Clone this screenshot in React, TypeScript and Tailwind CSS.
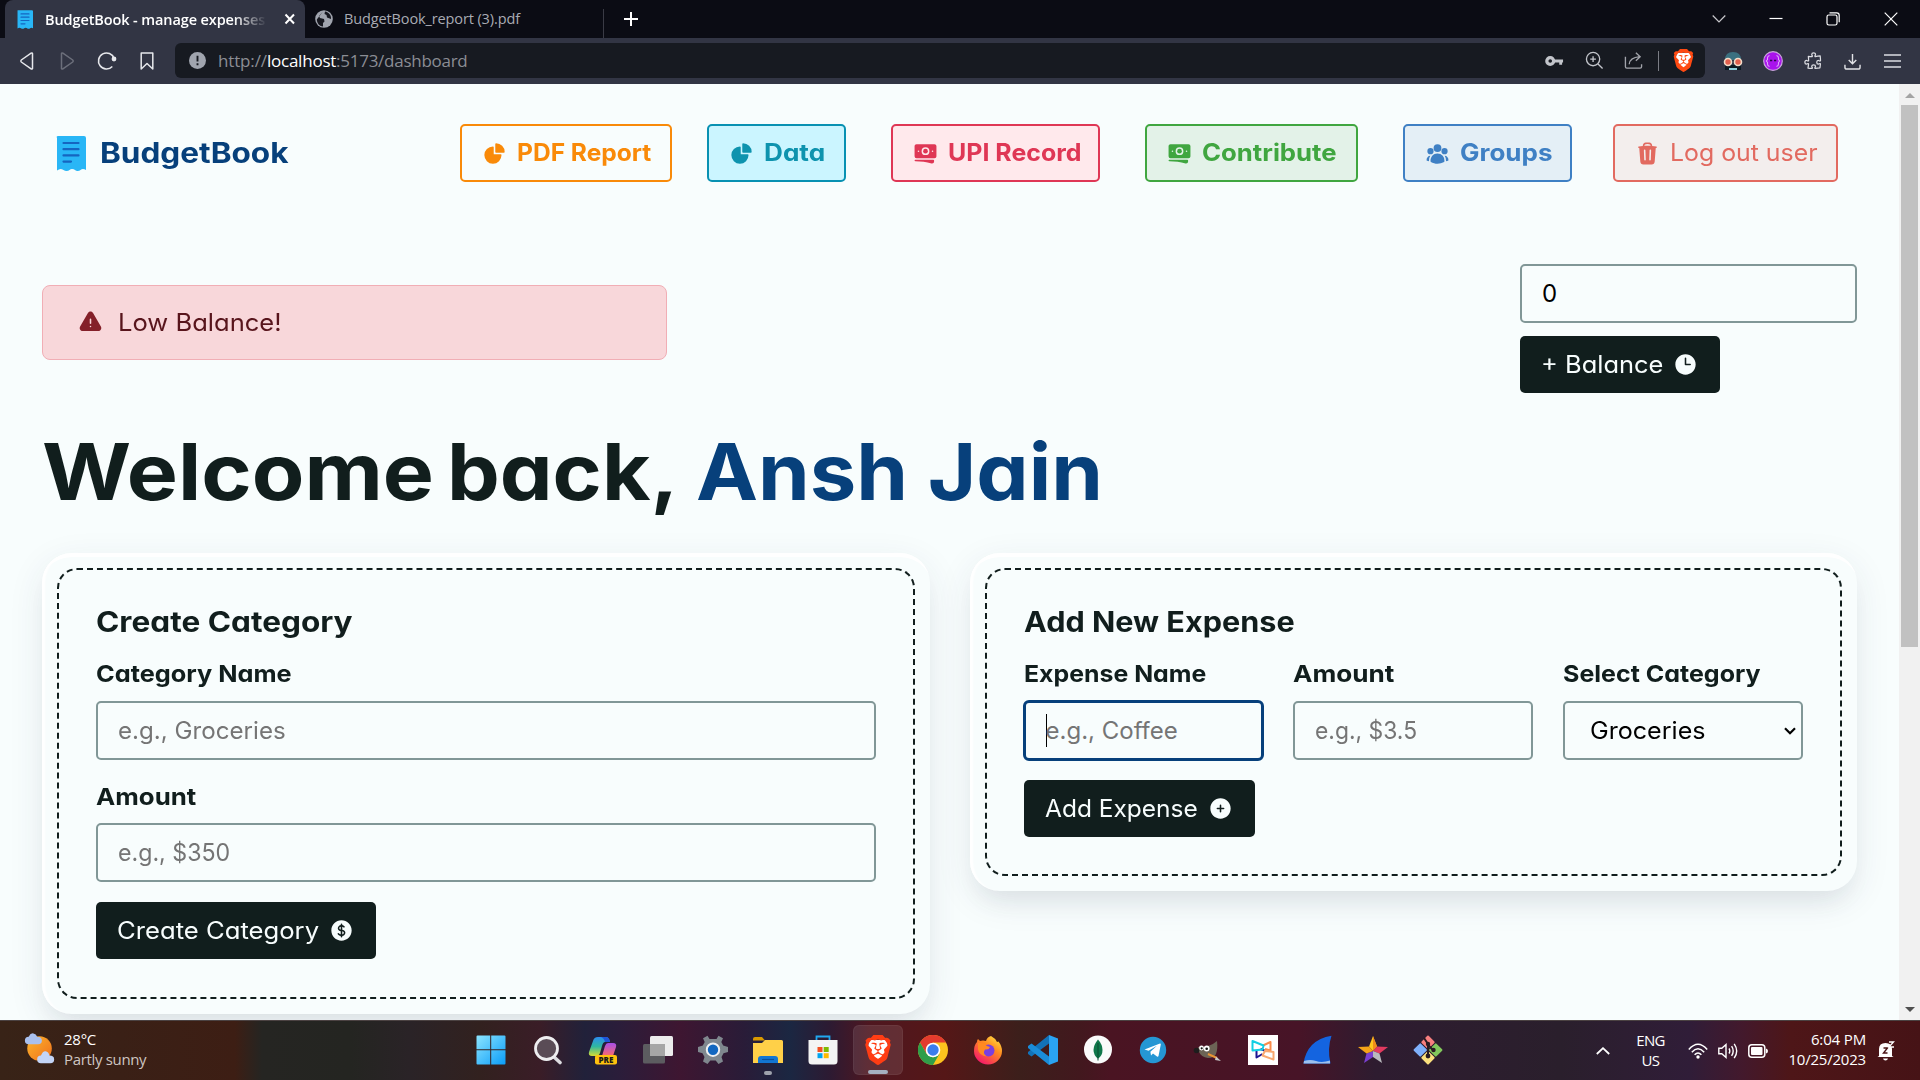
import { useLayoutEffect, useRef, useState, type ReactNode } from "react";
import {
  HiChartPie,
  HiBanknotes,
  HiUserGroup,
  HiTrash,
  HiExclamationTriangle,
  HiClock,
  HiCurrencyDollar,
  HiPlusCircle,
  HiOutlinePuzzlePiece,
} from "react-icons/hi2";
import { SiBrave } from "react-icons/si";

/* Text run spread with letter-spacing so that it fills `w` pixels. */
function Fit({ w, className = "", children }: { w: number; className?: string; children: string }) {
  const ref = useRef<HTMLSpanElement>(null);
  const [spacing, setSpacing] = useState(0);
  useLayoutEffect(() => {
    const el = ref.current;
    if (!el) return;
    setSpacing((w - el.offsetWidth) / children.length);
  }, [w, children]);
  return (
    <span ref={ref} className={"inline-block whitespace-pre " + className} style={{ letterSpacing: spacing }}>
      {children}
    </span>
  );
}

/* Text run whose letters are widened so that it fills `w` pixels. */
function Wide({ w, className = "", children }: { w: number; className?: string; children: string }) {
  const ref = useRef<HTMLSpanElement>(null);
  const [scale, setScale] = useState(1);
  useLayoutEffect(() => {
    const el = ref.current;
    if (!el) return;
    setScale(w / el.offsetWidth);
  }, [w, children]);
  return (
    <span className={"inline-block shrink-0 text-left whitespace-pre " + className} style={{ width: w }}>
      <span ref={ref} className="inline-block origin-left" style={{ transform: `scaleX(${scale})` }}>
        {children}
      </span>
    </span>
  );
}

function ReceiptLogo({ className }: { className: string }) {
  return (
    <svg viewBox="0 0 30 35" className={className}>
      <path
        d="M2 0h26q2 0 2 2v32q-1.500-1-3-1-1.500 0-2.500 1t-3 1q-1.500 0-2.500-1t-3-1q-1.500 0-2.500 1t-3 1q-1.500 0-3-1t-3-1q-1.500 0-3.500 1.500V2Q0 0 2 0Z"
        fill="#29b6f6"
      />
      <path d="M7.500 7h15M7.500 13.200h15M7.500 19.400h15M7.500 25.600h7.500" stroke="#1565c0" strokeWidth="2.200" strokeLinecap="round" />
    </svg>
  );
}

function BraveLion({ className, orange = "#fb542b" }: { className: string; orange?: string }) {
  return (
    <span className={"grid place-items-center " + className}>
      <svg viewBox="0 0 24 24" className="col-start-1 row-start-1 size-full">
        <path d="M5 4h14l1 6-3 9-5 3-5-3-3-9z" fill="#fff" />
      </svg>
      <SiBrave className="col-start-1 row-start-1 size-full" color={orange} />
    </span>
  );
}

function TabStrip() {
  return (
    <div className="flex h-[38px] items-stretch bg-[#0b0c14] pl-[5px] text-[15px] text-white">
      <div className="flex w-[300px] items-center rounded-t-lg bg-[#323544] pl-3">
        <ReceiptLogo className="h-[19px] w-4" />
        <div className="ml-3 w-[222px] overflow-hidden [mask-image:linear-gradient(to_right,black_85%,transparent)]">
          <Fit w={220} className="text-[14.5px] font-semibold">
            BudgetBook - manage expenses
          </Fit>
        </div>
        <svg viewBox="0 0 12 12" className="ml-[17px] size-3" stroke="#fff" strokeWidth="2">
          <path d="M1.500 1.500l8.500 9M10 1.500l-8.500 9" />
        </svg>
      </div>
      <div className="flex w-[298px] items-center pl-[10px] text-[#a9abb3]">
        <svg viewBox="0 0 18 18" className="size-[18px]">
          <circle cx="9" cy="9" r="8.800" fill="#a0a4ae" />
          <path d="M8 1.500L4 6l1 2 4 1 .5 2.500L8 13v3.500C4 16 2 13 1.800 9.500M10 1.500L9.500 4l2 1 .5 2.500 4 1.500c.5-3.500-2-7-6-7.500" fill="#16171f" />
        </svg>
        <Fit w={176} className="ml-[11px] text-[14.5px]">
          BudgetBook_report (3).pdf
        </Fit>
      </div>
      <div className="mt-[9px] w-px bg-[#3a3b45]" />
      <svg viewBox="0 0 16 16" className="ml-[19px] mt-[11px] size-4" stroke="#fff" strokeWidth="2">
        <path d="M8 1v14M1 8h14" />
      </svg>
      <div className="ml-auto flex items-center">
        <svg viewBox="0 0 14 14" className="mr-[43px] size-[14px]" fill="none" stroke="#c9c9cd" strokeWidth="1.200">
          <path d="M.7 3.500L7 10l6.300-6.500" />
        </svg>
        <svg viewBox="0 0 14 14" className="mr-[43px] size-[14px]" stroke="#fff" strokeWidth="1.200">
          <path d="M.5 6.500h13" />
        </svg>
        <svg viewBox="0 0 14 14" className="mr-[44px] size-[14px]" fill="none" stroke="#fff" strokeWidth="1.200">
          <rect x="1" y="3" width="10" height="10" rx="1.800" />
          <path d="M3.500.8h7.200Q13.200.8 13.200 3.200v7" />
        </svg>
        <svg viewBox="0 0 14 14" className="mr-[22px] size-[14px]" stroke="#fff" strokeWidth="1.200">
          <path d="M.7.700l12.600 12.600M13.300.7L.7 13.300" />
        </svg>
      </div>
    </div>
  );
}

function AddressBar() {
  return (
    <div className="flex h-[46px] items-center bg-[#323544]">
      <div className="mb-px flex w-[175px] items-center gap-5 pl-[17px]">
        <svg viewBox="0 0 20 20" className="size-5" fill="none" stroke="#e6e7eb" strokeWidth="1.500" strokeLinejoin="round">
          <path d="M15.500 2.500v15q-.4 1-1.400.3L4.300 11q-1-1 0-2l9.800-6.800q1-.6 1.400.3Z" />
        </svg>
        <svg viewBox="0 0 20 20" className="size-5" fill="none" stroke="#6c6f7b" strokeWidth="1.500" strokeLinejoin="round">
          <path d="M4.500 2.500v15q.4 1 1.400.3l9.800-6.800q1-1 0-2L5.900 2.200q-1-.6-1.400.3Z" />
        </svg>
        <svg viewBox="0 0 20 20" className="size-5" fill="none" stroke="#e6e7eb" strokeWidth="1.600">
          <path d="M15.300 15.500a8 8 0 1 1 1.800-8" />
          <circle cx="17" cy="8" r="1.600" fill="#e6e7eb" />
        </svg>
        <svg viewBox="0 0 20 20" className="size-5" fill="none" stroke="#e6e7eb" strokeWidth="1.500" strokeLinejoin="round">
          <path d="M4.200 2h11.600v16L10 12.500 4.200 18Z" />
        </svg>
      </div>
      <div className="mb-px flex h-[35px] w-[1530px] items-center rounded-md bg-[#171a21]">
        <svg viewBox="0 0 18 18" className="ml-[14px] size-[17px]">
          <circle cx="9" cy="9" r="9" fill="#a0a4ae" />
          <path d="M9 4v6M9 12v2" stroke="#171a21" strokeWidth="2" />
        </svg>
        <div className="ml-3 flex w-[252px] text-[17px] text-[#8b8d94]">
          <Fit w={49}>http://</Fit>
          <Fit w={69} className="text-white">localhost</Fit>
          <Fit w={131}>:5173/dashboard</Fit>
        </div>
        <svg viewBox="0 0 20 12" className="ml-auto h-3 w-[19px]" fill="none" stroke="#c3c5cb">
          <circle cx="5.500" cy="6" r="3.600" strokeWidth="3.400" />
          <path d="M9 6h10M16.500 6v4" strokeWidth="3" />
        </svg>
        <svg viewBox="0 0 20 20" className="ml-[21px] size-[19px]" fill="none" stroke="#c3c5cb" strokeWidth="1.400">
          <circle cx="8.500" cy="8.500" r="7" />
          <path d="M13.700 13.700l4.800 4.800M8.500 5.500v6M5.500 8.500h6" />
        </svg>
        <svg viewBox="0 0 20 20" className="ml-5 size-[19px]" fill="none" stroke="#a2a4ab" strokeWidth="1.400">
          <path d="M1.500 6v10.500q0 1.500 1.500 1.500h14q1.500 0 1.500-1.500V14" />
          <path d="M5.500 14Q6 7 16.500 6M12.500 1.800L17 6l-4.500 4.200" />
        </svg>
        <div className="ml-[15px] h-5 w-px bg-[#7b7d85]" />
        <BraveLion className="ml-[13px] mr-[10px] size-[23px]" orange="#ff4a12" />
      </div>
      <svg viewBox="0 0 20 20" className="ml-[18px] size-5">
        <path d="M2 9Q2 1 10 1t8 8z" fill="#3b7080" />
        <path d="M2 14h16v5H2z" fill="#0c1a22" />
        <path d="M6 17h8v2H6z" fill="#8fd0dc" />
        <circle cx="5" cy="11" r="3.500" fill="#e2604e" stroke="#f3dcc8" strokeWidth="1.600" />
        <circle cx="15" cy="11" r="3.500" fill="#e2604e" stroke="#f3dcc8" strokeWidth="1.600" />
      </svg>
      <svg viewBox="0 0 20 20" className="ml-5 size-5" fill="none">
        <circle cx="10" cy="10" r="9.300" fill="#a913ec" stroke="#c9a5dc" strokeWidth="1.200" />
        <path d="M6.500 4.500q-2 .5-2 2.500v1.500L3.300 10l1.200 1.500V13q0 2 2 2.500M13.500 4.500q2 .5 2 2.500v1.500l1.200 1.500-1.200 1.500V13q0 2-2 2.500" stroke="#dba6f7" strokeWidth="1.100" />
        <path d="M7 9.500h2.200M11 9.500h2.200" stroke="#2b0848" strokeWidth="1.500" />
      </svg>
      <HiOutlinePuzzlePiece className="ml-5 size-5 text-[#dcdde2]" />
      <svg viewBox="0 0 18 18" className="ml-[21px] size-[17px]" fill="none" stroke="#e2e3e7" strokeWidth="1.500">
        <path d="M9 1v10M5 7.500L9 11.500l4-4M1 12.500v2.500q0 2 2 2h12q2 0 2-2v-2.500" />
      </svg>
      <svg viewBox="0 0 17 14" className="ml-[23px] h-[14px] w-[17px]" stroke="#dcdde2" strokeWidth="1.500">
        <path d="M0 1h17M0 7h17M0 13h17" />
      </svg>
    </div>
  );
}

function NavButton({ className, icon, children }: { className: string; icon: ReactNode; children: ReactNode }) {
  return (
    <button className={"flex h-[58px] items-center gap-[10px] rounded-[5px] border-2 pl-5 text-[24px] " + className}>
      {icon}
      {children}
    </button>
  );
}

function NavBar() {
  return (
    <nav className="flex h-[58px] items-center pl-[14px]">
      <div className="flex w-[404px] items-center gap-[14px] text-[28px] font-bold text-[#07407b]">
        <ReceiptLogo className="h-[35px] w-[30px]" />
        <Wide w={188}>BudgetBook</Wide>
      </div>
      <NavButton className="w-[212px] border-[#f98a09] font-bold text-[#f98a09]" icon={<HiChartPie className="size-[25px]" />}>
        <Wide w={134}>PDF Report</Wide>
      </NavButton>
      <NavButton className="ml-[35px] w-[139px] border-[#0891b2] bg-[#cbf5ff] font-bold text-[#0e93ae]" icon={<HiChartPie className="size-[25px]" />}>
        <Wide w={61}>Data</Wide>
      </NavButton>
      <NavButton className="ml-[45px] w-[209px] border-[#df3755] bg-[#ffe9ec] font-bold text-[#df3755]" icon={<HiBanknotes className="size-[25px]" />}>
        <Wide w={133}>UPI Record</Wide>
      </NavButton>
      <NavButton className="ml-[45px] w-[213px] border-[#40a640] bg-[#e3f2e8] font-bold text-[#40a640]" icon={<HiBanknotes className="size-[25px]" />}>
        <Wide w={135}>Contribute</Wide>
      </NavButton>
      <NavButton className="ml-[45px] w-[169px] border-[#3f80c4] bg-[#e4eff6] font-bold text-[#3f80c4]" icon={<HiUserGroup className="size-[25px]" />}>
        <Wide w={92}>Groups</Wide>
      </NavButton>
      <NavButton className="ml-[41px] w-[225px] border-[#e26a60] bg-[#f3eeed] text-[#e26a60]" icon={<HiTrash className="size-[25px]" />}>
        <Wide w={148}>Log out user</Wide>
      </NavButton>
    </nav>
  );
}

function DarkButton({ className, icon, children }: { className: string; icon: ReactNode; children: ReactNode }) {
  return (
    <button className={"flex h-[57px] items-center gap-[10px] rounded-[5px] bg-[#111e1d] pl-[21px] text-[24px] text-[#f7fdfd] " + className}>
      {children}
      {icon}
    </button>
  );
}

function Field({ label, children }: { label: ReactNode; children: ReactNode }) {
  return (
    <div className="flex flex-col">
      <div className="flex h-[27px] items-center text-[23.5px] font-bold">{label}</div>
      <div className="mt-[14px] flex">{children}</div>
    </div>
  );
}

const inputBox = "flex h-[59px] w-full items-center rounded-[5px] border-2 border-[#819797] pl-5 text-[24px] text-[#757575]";

function FormCard({ className, children }: { className: string; children: ReactNode }) {
  return (
    <section
      className={
        "rounded-[30px] bg-[#f8fdfd] p-[15px] shadow-[inset_0_7px_0_-3px_#fff,inset_5px_0_2px_-2px_#fff,0_10px_36px_rgba(40,50,90,0.09),0_18px_26px_-10px_rgba(30,40,50,0.07)] " +
        className
      }
    >
      <div className="flex h-full flex-col rounded-[20px] border-2 border-dashed border-[#111e1d] px-[37px] pt-[34px]">{children}</div>
    </section>
  );
}

function Dashboard() {
  return (
    <div className="flex w-[1899px] flex-col bg-[#f8fdfd] pl-[42px] pr-[42px] pt-[40px] font-['Inter','Liberation_Sans',sans-serif] text-[#111e1d] [font-feature-settings:'cv11']">
      <NavBar />
      <div className="mt-[82px] flex h-[129px] items-start justify-between">
        <div className="mt-[21px] flex h-[75px] w-[625px] items-center gap-[15px] rounded-lg border border-[#f1aeb5] bg-[#f8d7da] pl-[35px] text-[24px] text-[#58151c]">
          <HiExclamationTriangle className="size-[25px] text-[#842029]" />
          <Wide w={164}>Low Balance!</Wide>
        </div>
        <div className="flex w-[337px] flex-col gap-[13px]">
          <div className={inputBox}>
            <span className="text-black">0</span>
          </div>
          <DarkButton className="w-[200px]" icon={<HiClock className="size-[25px]" />}>
            <Wide w={122}>+ Balance</Wide>
          </DarkButton>
        </div>
      </div>
      <h1 className="mt-[31px] flex h-24 items-center text-[78px] font-bold leading-none">
        <Wide w={392}>Welcome</Wide>
        <Wide w={232} className="ml-[13px]">back,</Wide>
        <Wide w={407} className="ml-[17px] text-[#07407b]">Ansh Jain</Wide>
      </h1>
      <div className="mt-[33px] flex items-start gap-10">
        <FormCard className="h-[461px] w-[887.5px]">
          <h2 className="flex h-9 items-center text-[28px] font-bold">
            <Wide w={257}>Create Category</Wide>
          </h2>
          <div className="mt-[20px] flex flex-col gap-[22px]">
            <Field label={<Wide w={196}>Category Name</Wide>}>
              <div className={inputBox}>
                <Wide w={168}>e.g., Groceries</Wide>
              </div>
            </Field>
            <Field label={<Wide w={100} className="mt-[2px]">Amount</Wide>}>
              <div className={inputBox}>
                <Wide w={112}>e.g., $350</Wide>
              </div>
            </Field>
          </div>
          <DarkButton className="mt-5 w-[280px]" icon={<HiCurrencyDollar className="size-[25px]" />}>
            <Wide w={202}>Create Category</Wide>
          </DarkButton>
        </FormCard>
        <FormCard className="h-[338px] w-[887.5px]">
          <h2 className="flex h-9 items-center text-[28px] font-bold">
            <Wide w={271}>Add New Expense</Wide>
          </h2>
          <div className="mt-[20px] grid grid-cols-3 gap-[30px]">
            <Field label={<Wide w={182}>Expense Name</Wide>}>
              <div className="-mx-px -my-px flex h-[61px] w-[241px] shrink-0 items-center rounded-md border-[3px] border-[#07407b] pl-5 text-[24px] text-[#757575]">
                <span className="-mr-px h-[33px] w-px bg-black" />
                <Wide w={132}>e.g., Coffee</Wide>
              </div>
            </Field>
            <Field label={<Wide w={101}>Amount</Wide>}>
              <div className={inputBox}>
                <Wide w={102}>e.g., $3.5</Wide>
              </div>
            </Field>
            <Field label={<Wide w={198}>Select Category</Wide>}>
              <div className={inputBox + " justify-between pr-[5px]"}>
                <Wide w={116} className="ml-[5px] text-black">Groceries</Wide>
                <svg viewBox="0 0 12 8" className="h-2 w-3" fill="none" stroke="#000" strokeWidth="2.200">
                  <path d="M1 1.200l5 5 5-5" />
                </svg>
              </div>
            </Field>
          </div>
          <DarkButton className="mt-[20px] w-[231px]" icon={<HiPlusCircle className="size-[25px]" />}>
            <Wide w={153}>Add Expense</Wide>
          </DarkButton>
        </FormCard>
      </div>
    </div>
  );
}

function ScrollBar() {
  return (
    <div className="flex w-[21px] flex-col items-center bg-[#f1f1f1]">
      <svg viewBox="0 0 10 5" className="mt-[9px] h-[5px] w-[10px]" fill="#a3a3a3">
        <path d="M5 0l5 5H0z" />
      </svg>
      <div className="mt-[7px] h-[542px] w-[17px] bg-[#c1c1c1]" />
      <svg viewBox="0 0 10 5" className="mb-2 mt-auto h-[5px] w-[10px]" fill="#505050">
        <path d="M0 0h10L5 5z" />
      </svg>
    </div>
  );
}

const appIcons: ReactNode[] = [
  <svg key="start" viewBox="0 0 30 30" className="mr-[3px] size-[30px]">
    <defs>
      <linearGradient id="win" x1="0" y1="0" x2="1" y2="1">
        <stop offset="0" stopColor="#8ce5ff" />
        <stop offset="1" stopColor="#0a9cf8" />
      </linearGradient>
    </defs>
    <path d="M1.500.5h12.700v13.700H.500V1.500q0-1 1-1ZM15.200.5h13.300q1 0 1 1v12.700H15.200ZM.5 15.200h13.700v14.300H1.500q-1 0-1-1ZM15.200 15.200h14.300v13.300q0 1-1 1H15.200Z" fill="url(#win)" />
  </svg>,
  <svg key="search" viewBox="0 0 30 30" className="size-[30px]">
    <path d="M21 22l6 5.500" stroke="#dcdce0" strokeWidth="3.600" strokeLinecap="round" />
    <circle cx="13.500" cy="13.500" r="11" fill="#5a4c56" stroke="#eeeef0" strokeWidth="2.800" />
  </svg>,
  <svg key="copilot" viewBox="0 0 30 30" className="size-[30px]">
    <defs>
      <linearGradient id="copA" x1="0" y1="0" x2="0" y2="1">
        <stop offset="0" stopColor="#2c8df0" />
        <stop offset=".5" stopColor="#2fb8a0" />
        <stop offset="1" stopColor="#d6dc33" />
      </linearGradient>
      <linearGradient id="copB" x1="0" y1="0" x2="0" y2="1">
        <stop offset="0" stopColor="#a64fe8" />
        <stop offset="1" stopColor="#fb6a6a" />
      </linearGradient>
    </defs>
    <path d="M10 2h8q3 0 4 5h-5q-2 0-3 4l-2 7q-1 3-4 3H4q-4 0-3-4L5 6q1-4 5-4Z" fill="url(#copA)" />
    <path d="M15 2h3q3 0 4 5h-5q-1-4-4-5z" fill="#1f55d8" />
    <path d="M20 8h5q4 0 3 4l-3 9H14l3-10q1-3 3-3Z" fill="url(#copB)" />
    <rect x="7" y="20" width="22" height="9.500" rx="2" fill="#ffc20e" />
    <text x="18" y="27.700" textAnchor="middle" fontSize="8" fontWeight="800" fill="#1a1a1a" fontFamily="Open Sans">PRE</text>
  </svg>,
  <svg key="taskview" viewBox="0 0 30 30" className="size-[30px]">
    <rect x="7" y="1" width="23" height="20" rx="1.500" fill="#ececec" />
    <rect x="0" y="9" width="22" height="19.500" rx="1.500" fill="#5c5c60" />
    <path d="M7 9h15v12H7z" fill="#a6a6a6" />
  </svg>,
  <svg key="settings" viewBox="0 0 30 30" className="size-[30px]">
    <path
      d="M11.500 4L9.500.8 5 3.300 6.700 7 4.800 10.500 0 12v5l4.500 1.300 2 3.700L5 26.500 9.500 29l2.800-3.500h5.400l2.800 3.500 4.500-2.500-1.500-4.500 2-3.700L30 17v-5l-4.800-1.500L23.300 7 25 3.300 20.500.8l-2 3.200Z"
      fill="#7f878e"
    />
    <circle cx="15" cy="14.700" r="6.200" fill="#1267c0" stroke="#eef0f2" strokeWidth="2" />
  </svg>,
  <svg key="explorer" viewBox="0 0 30 30" className="size-[30px]">
    <path d="M0 4q0-2 2-2h7l3 3.500H0z" fill="#d99a00" />
    <path d="M0 8h9l3-3h16.500Q30 5 30 6.500V28H0z" fill="#ffd048" />
    <path d="M5 28v-4q0-3 3-3h14q3 0 3 3v4z" fill="#1276d2" />
    <path d="M9 24.500h12" stroke="#0a4f9a" strokeWidth="1.200" />
  </svg>,
  <svg key="store" viewBox="0 0 30 30" className="size-[30px]">
    <path d="M8.500 7V1.500h13V7" fill="none" stroke="#20a8f0" strokeWidth="1.800" />
    <path d="M.5 5h29v21q0 3.500-3.500 3.500H4Q.5 29.500.5 26z" fill="#f4f4f4" />
    <path d="M9.500 12h5v5h-5z" fill="#f25022" />
    <path d="M15.700 12h5v5h-5z" fill="#7fba00" />
    <path d="M9.500 18.200h5v5h-5z" fill="#00a4ef" />
    <path d="M15.700 18.200h5v5h-5z" fill="#ffb900" />
  </svg>,
  <BraveLion key="brave" className="size-[30px]" orange="#ff3d14" />,
  <svg key="chrome" viewBox="0 0 30 30" className="size-[30px]">
    <circle cx="15" cy="15" r="15" fill="#fcc31e" />
    <path d="M15 7.500h13A15 15 0 0 0 2 7.500l6.500 11.200z" fill="#e33b2e" />
    <path d="M2 7.500A15 15 0 0 0 15 30l6.500-11.300L15 22.500l-6.500-3.800z" fill="#2f9e4a" />
    <circle cx="15" cy="15" r="7.300" fill="#fff" />
    <circle cx="15" cy="15" r="5.700" fill="#3b7ded" />
  </svg>,
  <svg key="firefox" viewBox="0 0 30 30" className="size-[30px]">
    <defs>
      <linearGradient id="ff" x1="1" y1="0" x2=".3" y2="1">
        <stop offset="0" stopColor="#fff04a" />
        <stop offset=".45" stopColor="#ff8b1f" />
        <stop offset="1" stopColor="#f5186a" />
      </linearGradient>
    </defs>
    <path d="M18 1q4 2 6 6l1.500-.5Q29 11 29 16a14 13.500 0 0 1-28 0Q1 10 4 7q0-2 1-3l2 2q3-1 6 0 1-4 5-5Z" fill="url(#ff)" />
    <circle cx="15.500" cy="15.500" r="6" fill="#7a3fe0" />
    <path d="M5 8q5-1 9 3l3 1q-1 3-5 2.500-3 4 2 7-8-1-9-7z" fill="#ff8a22" />
  </svg>,
  <svg key="code" viewBox="0 0 30 30" className="size-[30px]">
    <path d="M21 0v8.500L3.500 21.500 0 19v-2z" fill="#1272b8" />
    <path d="M21 30v-8.500L3.500 8.500 0 11v2z" fill="#1a8cd8" />
    <path d="M21 0l9 3.500v23L21 30z" fill="#2aa3f2" />
  </svg>,
  <svg key="mongo" viewBox="0 0 30 30" className="size-[30px]">
    <circle cx="15" cy="14.500" r="14" fill="#fafafa" />
    <path d="M15 4.500q4.500 5 4.500 10.500T15.300 23.500h-.6Q10.500 20 10.500 15T15 4.500Z" fill="#10774a" />
    <path d="M15 8v17.500" stroke="#0b4d31" strokeWidth="1" />
  </svg>,
  <svg key="telegram" viewBox="0 0 30 30" className="size-[30px]">
    <circle cx="15" cy="15" r="13.200" fill="#2597d4" />
    <path d="M6.500 14.500L22 8.500q1 0 .8 1L20.500 21q-.5 1-1.500.4l-4-3-2 2-.6-3.700 6.500-6-8.300 5z" fill="#fff" />
  </svg>,
  <svg key="gimp" viewBox="0 0 30 30" className="size-[30px]">
    <path d="M5 12q4 1 10-1 6-2 9-5 1 8-1 13-2 4-8 4-7-1-9-6z" fill="#6c6455" />
    <circle cx="3.500" cy="15.500" r="2.800" fill="#1d1d1d" />
    <circle cx="8.500" cy="13" r="2.400" fill="#fff" />
    <circle cx="13.700" cy="13.500" r="2.900" fill="#fff" />
    <circle cx="8.700" cy="13.300" r="1.100" fill="#111" />
    <circle cx="13.700" cy="13.800" r="1.300" fill="#111" />
    <path d="M15 19l9 4" stroke="#e99433" strokeWidth="2" />
    <path d="M23 21.500l5 4.500-6-1z" fill="#c8c8c8" />
  </svg>,
  <svg key="bb" viewBox="0 0 30 30" className="size-[30px]" fill="none" strokeWidth="2" strokeLinejoin="round">
    <path d="M0 0h30v30H0z" fill="#fff" />
    <path d="M15 10.500L22.500 7v8.500L17 14" stroke="#fb8c4c" />
    <path d="M8.500 16v6.500l6-3.500M12.500 14l4 1.500" stroke="#1d1593" />
    <path d="M4.500 15.500V6l11 4.500-1 4z" stroke="#12cfe4" />
    <path d="M14.500 20.500l2.500-4.500 8.500 1v7.500z" stroke="#f9a870" />
  </svg>,
  <svg key="wireshark" viewBox="0 0 30 30" className="size-[30px]">
    <path d="M.5 28.500Q4 5 28.500.8 24 14 27.500 28.500z" fill="#1464e0" />
    <path d="M1 26q6-2 12 0t14-.5v3H.5z" fill="#9cc0ee" />
  </svg>,
  <svg key="star" viewBox="0 0 30 30" className="size-[30px]">
    <path d="M15 1l4 10.500L15 16l-4-4.500z" fill="#ffc61e" />
    <path d="M15 1l4 10.500L15 16z" fill="#f08c1a" />
    <path d="M19 11.500L30 12l-8.500 6.500L15 16z" fill="#e23a5f" />
    <path d="M21.500 18.500L24 28l-9-6v-6z" fill="#b9b9bd" />
    <path d="M15 22l-9 6 2.500-9.500L15 16z" fill="#7a3fd0" />
    <path d="M8.500 18.500L0 12l11-.5L15 16z" fill="#f6a417" />
  </svg>,
  <svg key="git" viewBox="0 0 30 30" className="size-[30px]">
    <g transform="rotate(45 15 15)">
      <rect x="4.500" y="4.500" width="10" height="10" rx="1" fill="#f77f7f" />
      <rect x="15.500" y="4.500" width="10" height="10" rx="1" fill="#82c85c" />
      <rect x="4.500" y="15.500" width="10" height="10" rx="1" fill="#7fb0fb" />
      <rect x="15.500" y="15.500" width="10" height="10" rx="1" fill="#fbe07d" />
    </g>
    <path d="M11 3l4 6v12M15 10l5 5" stroke="#2a1b22" strokeWidth="2" fill="none" />
    <circle cx="15" cy="9" r="2.200" fill="#2a1b22" />
    <circle cx="20.500" cy="15" r="2.200" fill="#2a1b22" />
    <circle cx="15" cy="21" r="2.400" fill="#2a1b22" />
  </svg>,
];

function TaskBar() {
  return (
    <div className="flex h-[60px] items-center border-t border-[#4b4242] bg-[linear-gradient(to_right,#382317_0px,#3a2016_120px,#3d1e14_235px,#252522_262px,#242521_350px,#2a2327_410px,#32211f_480px,#3a1d27_540px,#21213a_585px,#2b1d3a_620px,#3e1631_680px,#291c38_745px,#1b2742_790px,#2d1a32_830px,#4f1720_870px,#551717_945px,#3c1f1b_1020px,#42181e_1080px,#4a1422_1110px,#471427_1300px,#2e1c30_1375px,#2a1f2c_1560px,#301d38_1690px,#42192d_1740px,#4e1618_1790px,#461316_1920px)] text-[15px] leading-5 text-white">
      <svg viewBox="0 0 32 36" className="mb-1 ml-6 h-[34px] w-8">
        <defs>
          <linearGradient id="sun" x1="0" y1="0" x2="1" y2="1">
            <stop offset="0" stopColor="#fbb52c" />
            <stop offset="1" stopColor="#f0701c" />
          </linearGradient>
        </defs>
        <circle cx="15.500" cy="17.500" r="13" fill="url(#sun)" />
        <path d="M4 13q-4 0-4-4t4-4q2-4 5-3.500T13 5q5 0 5 4t-4 4z" fill="#a9c0ee" />
        <path d="M17 33q-4 0-4-4t4-4q2-5 5-4.500T26 25q5 0 5 4t-4 4z" fill="#c3d4f6" />
      </svg>
      <div className="mb-[3px] ml-2 flex flex-col items-start">
        <Fit w={32}>28°C</Fit>
        <Fit w={82} className="text-[#cfc6c2]">Partly sunny</Fit>
      </div>
      <div className="mb-px ml-[319px] flex items-center">
        {appIcons.map((icon, i) => (
          <div
            key={i}
            className={
              i === 7
                ? "relative ml-[3px] mr-[2px] grid h-[50px] w-[50px] place-items-center rounded-md border border-white/5 bg-white/10"
                : "relative grid h-[50px] w-[55px] place-items-center"
            }
          >
            {icon}
            {i === 5 && <span className="absolute -bottom-0 left-6 h-1 w-2 rounded-full bg-[#9ea2ad]" />}
            {i === 7 && <span className="absolute -bottom-0 left-[14px] h-1 w-5 rounded-full bg-[#a5afc0]" />}
          </div>
        ))}
      </div>
      <svg viewBox="0 0 14 8" className="ml-auto h-2 w-[14px]" fill="none" stroke="#fff" strokeWidth="1.800">
        <path d="M.8 7L7 1.200 13.200 7" />
      </svg>
      <div className="mb-px ml-[26px] flex w-[29px] flex-col items-center">
        <Fit w={29}>ENG</Fit>
        <Fit w={18}>US</Fit>
      </div>
      <svg viewBox="0 0 20 16" className="ml-[23px] h-4 w-5" fill="none" stroke="#fff" strokeWidth="1.500">
        <path d="M.8 6.500Q10-4 19.200 6.500M3.800 9.200q6.200-6.800 12.400 0M6.600 11.800q3.400-3.600 6.800 0" />
        <circle cx="10" cy="14" r="1.700" fill="#fff" stroke="none" />
      </svg>
      <svg viewBox="0 0 20 18" className="ml-[10px] h-[18px] w-5" fill="none" stroke="#fff" strokeWidth="1.400">
        <path d="M.8 6.200h3L8 2.500v13l-4.200-3.700h-3zM11 6.500q1.600 2.500 0 5M13.600 4.200q3.200 4.800 0 9.600M16.200 1.800q5 7.200 0 14.400" />
      </svg>
      <svg viewBox="0 0 20 14" className="ml-[10px] h-[14px] w-5">
        <rect x=".8" y=".8" width="16" height="12.400" rx="3" fill="none" stroke="#fff" strokeWidth="1.500" />
        <rect x="3" y="3" width="11.500" height="8" rx="1" fill="#fff" />
        <path d="M18 4.500q2 .5 2 2.500t-2 2.500z" fill="#fff" />
      </svg>
      <div className="mb-[4px] ml-[20px] flex w-[78px] flex-col items-end">
        <Fit w={55}>6:04 PM</Fit>
        <Fit w={78}>10/25/2023</Fit>
      </div>
      <svg viewBox="0 0 18 20" className="ml-[11px] mr-[25px] h-5 w-[18px]">
        <path d="M2 15V8q0-6 6.500-6 6.500 0 6.500 6v7l1.500 1H.5zM6 17.500h5q-.5 2-2.500 2t-2.500-2z" fill="#fff" />
        <path d="M6.500 7h4l-4 5h4" stroke="#4a1416" strokeWidth="1.400" fill="none" />
        <path d="M12 1h4.500L12 6h5" stroke="#fff" strokeWidth="1.300" fill="#4a1416" />
      </svg>
    </div>
  );
}

export default function App() {
  return (
    <div className="flex h-[1080px] w-[1920px] flex-col overflow-hidden bg-[#f8fdfd] font-['Open_Sans','Noto_Sans',sans-serif]">
      <TabStrip />
      <AddressBar />
      <main className="flex h-[936px] overflow-hidden">
        <Dashboard />
        <ScrollBar />
      </main>
      <TaskBar />
    </div>
  );
}
